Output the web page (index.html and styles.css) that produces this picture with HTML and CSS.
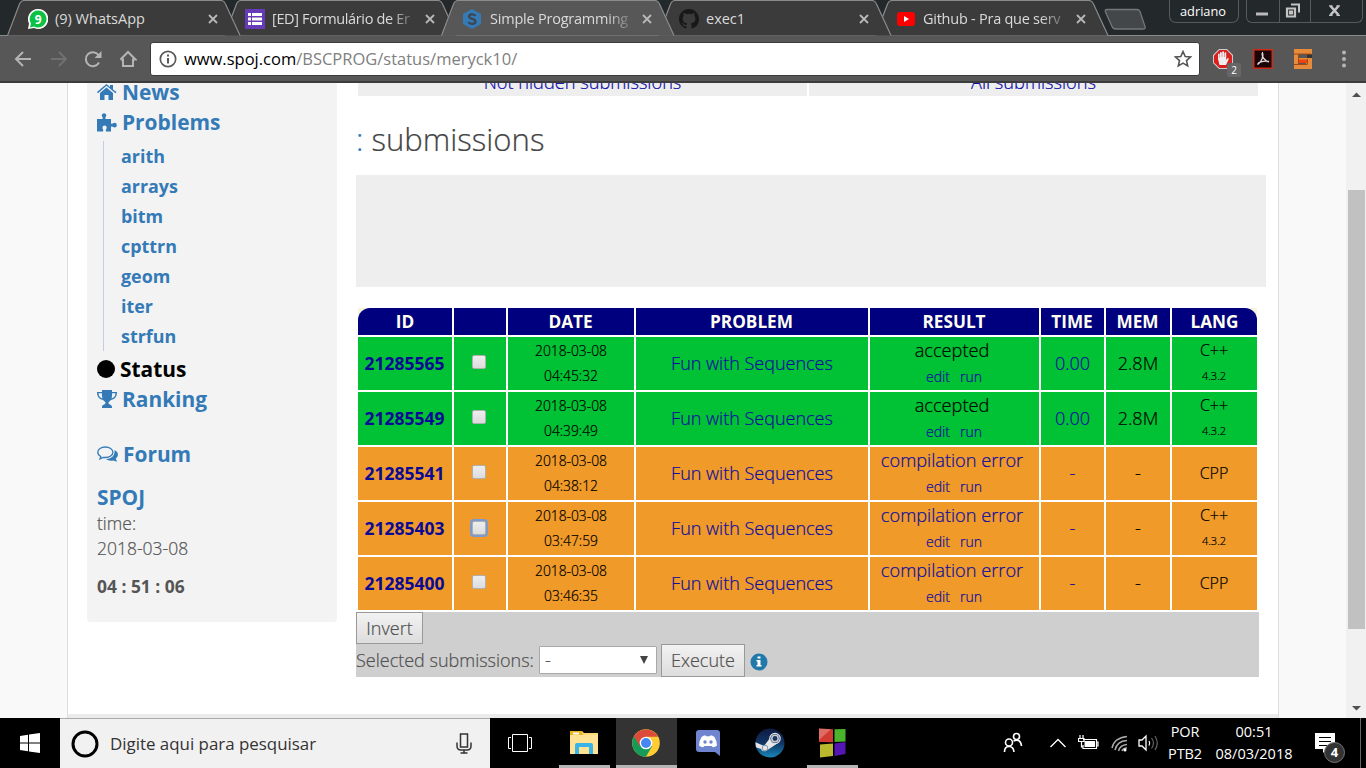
FILE: index.html
```html
<!DOCTYPE html>
<html lang="pt">
<head>
<meta charset="utf-8">
<title>Simple Programming</title>
<link rel="stylesheet" href="styles.css">
</head>
<body>
<svg class="defs" width="0" height="0">
  <defs>
    <g id="tab-shape"><path d="M0.5 35.5 L12.5 4 Q14 .5 17 .5 H214 Q217 .5 218.500 4 L233 35.500"/></g>
    <path id="cross" d="M1 1 L9 9 M9 1 L1 9"/>
  </defs>
</svg>
<header class="browser">
  <div class="tabstrip">
    <div class="tab t1"><svg class="shape" width="234" height="36"><use href="#tab-shape"/></svg>
      <svg class="fav" width="20" height="20"><path d="M10 0a10 10 0 1 1-4 19L0 20l1-5.500A10 10 0 0 1 10 0z" fill="#fff"/><path d="M10 1.500a8.500 8.500 0 1 1-4 16L2 18.500l1-4A8.500 8.500 0 0 1 10 1.500z" fill="#0cc143"/><text x="6.700" y="14.500" class="wa">9</text></svg>
      <span class="title s1">(9) WhatsApp</span><svg class="x" width="10" height="10"><use href="#cross"/></svg></div>
    <div class="tab t2"><svg class="shape" width="234" height="36"><use href="#tab-shape"/></svg>
      <svg class="fav" width="20" height="20"><path fill="#673ab7" d="M0 0h20v20H0z"/><path fill="#fff" d="M3 4h3v3H3zM7 4h10v3H7zM3 8.500h3v3H3zM7 8.500h10v3H7zM3 13h3v3H3zM7 13h10v3H7z"/></svg>
      <span class="title fade s2">[ED] Formulário de Er</span><svg class="x" width="10" height="10"><use href="#cross"/></svg></div>
    <div class="tab t3"><svg class="shape" width="234" height="36"><use href="#tab-shape"/></svg>
      <svg class="fav" width="20" height="20"><path fill="#337ab7" d="M10 0l9 5v10l-9 5-9-5V5z"/><path d="M13.500 6.800C12 4.700 7 4.700 7 7.500c0 3 6.500 1.800 6.500 5 0 3-5.500 3-7.200.7" fill="none" stroke="#3e454d" stroke-width="2.200"/></svg>
      <span class="title fade s3">Simple Programming</span><svg class="x" width="10" height="10"><use href="#cross"/></svg></div>
    <div class="tab t4"><svg class="shape" width="234" height="36"><use href="#tab-shape"/></svg>
      <svg class="fav" width="20" height="20" viewBox="0 0 16 16"><path fill="#191717" d="M8 0C3.580 0 0 3.580 0 8c0 3.540 2.290 6.530 5.470 7.590.4.070.55-.17.55-.38 0-.19-.01-.82-.01-1.490-2.010.37-2.530-.49-2.690-.94-.09-.23-.48-.94-.82-1.130-.28-.15-.68-.52-.01-.53.63-.01 1.080.58 1.230.82.72 1.210 1.870.87 2.330.66.070-.52.28-.87.51-1.070-1.780-.2-3.640-.89-3.640-3.950 0-.87.31-1.590.82-2.150-.08-.2-.36-1.020.08-2.120 0 0 .67-.21 2.200.82a7.400 7.400 0 0 1 4 0c1.530-1.040 2.200-.82 2.200-.82.44 1.100.16 1.920.08 2.120.51.56.82 1.270.82 2.150 0 3.070-1.870 3.750-3.650 3.950.29.25.54.73.54 1.480 0 1.070-.01 1.930-.01 2.200 0 .21.15.46.55.38A8 8 0 0 0 16 8c0-4.420-3.580-8-8-8z"/></svg>
      <span class="title s4">exec1</span><svg class="x" width="10" height="10"><use href="#cross"/></svg></div>
    <div class="tab t5"><svg class="shape" width="234" height="36"><use href="#tab-shape"/></svg>
      <svg class="fav" width="20" height="20"><rect x="1" y="3" width="18" height="14" rx="3" fill="#f00"/><path fill="#fff" d="M8 7l5 3-5 3z"/></svg>
      <span class="title fade s5">Github - Pra que serv</span><svg class="x" width="10" height="10"><use href="#cross"/></svg></div>
    <svg class="newtab" width="44" height="23"><path d="M3 1.500h30q2 0 3 2l5 15q1 2.500-2 2.500H12q-3 0-4-2.500L1.500 4q-1-2.500 1.500-2.500z"/></svg>
    <div class="user">adriano</div>
    <div class="winbtns">
      <svg width="32" height="23"><path class="f" d="M9 12.500h12v3H9z"/></svg>
      <svg width="31" height="23"><path d="M7 8.500h8v8H7zM10 11.500h2v2h-2z" stroke-width="2.200"/><path d="M11 4.500h8v8" stroke-width="2"/></svg>
      <svg width="52" height="23"><path d="M19.500 6l8 9M27.500 6l-8 9" stroke-width="2.600"/><path d="M18 5.800h3.500M25.500 5.800H29M18 15.300h3.500M25.500 15.300H29" stroke-width="1.200"/></svg>
    </div>
  </div>
  <div class="toolbar">
    <svg class="nav n1" width="18" height="18"><path d="M17 9H2M9 2L2 9l7 7"/></svg>
    <svg class="nav n2" width="18" height="18"><path d="M1 9h15M9 2l7 7-7 7"/></svg>
    <svg class="nav n3" width="18" height="18"><path d="M15 12.500A7 7 0 1 1 14.500 5"/><path class="tip" d="M17.500 1v7h-7z"/></svg>
    <svg class="nav n4" width="18" height="18"><path d="M4 8.500V16h10V8.500M1.500 9.500L9 2l7.500 7.500H14M1.500 9.500H4"/></svg>
    <div class="omnibox">
      <svg width="18" height="18"><circle cx="9" cy="9" r="7.700" fill="none" stroke="#5a5a5a" stroke-width="1.700"/><path d="M9 8v5.500M9 4.500v2" stroke="#5a5a5a" stroke-width="2"/></svg>
      <span class="url"><b>www.spoj.com</b>/BSCPROG/status/meryck10/</span>
      <svg class="star" width="18" height="18"><path d="M9 1.500l2.200 5 5.300.5-4 3.600 1.200 5.300L9 13.100l-4.700 2.800 1.200-5.300-4-3.600 5.300-.5z"/></svg>
    </div>
    <div class="ext e1"><svg width="20" height="20"><path d="M6 0h8l6 6v8l-6 6H6l-6-6V6z" fill="#ccc"/><path d="M6.500 1h7L19 6.500v7L13.500 19h-7L1 13.500v-7z" fill="#d8201f"/><path d="M6.500 16L5 10V5q1-1 1.700 0V9h.3V3.500q1-1 1.800 0V8h.4V2.800q1-1 1.800 0V8h.4V3.800q1-1 1.800 0V11l1.500-2q1.300 0 1 1.200l-2.700 5.800z" fill="#eee"/></svg><span>2</span></div>
    <svg class="ext e2" width="20" height="20"><path d="M0 0h20v20H0z" fill="#cd2d18"/><path d="M1.500 1.500h17v17h-17z" fill="#1c0306"/><path d="M9.500 3.800c1.500 3-1 9-4.500 11.500-.8-1.500 5-4 10.500-3 .5 1.500-4.500-1-6-5-.5-1.500-.5-3 0-3.500z" fill="none" stroke="#ddd" stroke-width="1.300"/></svg>
    <svg class="ext e3" width="20" height="20"><path d="M1 0h18v5H6v4h13v11H1v-4h12v-2H1z" fill="#e68b3c"/><path d="M1 5h5v10H1z" fill="#e68b3c"/><path d="M6 10.500h8v3.500H6z" fill="#f0430c"/><path d="M14 5.500h5V9h-5z" fill="#333"/><path d="M1 5h17M5.500 5v10M14.500 10v5M1 15.500h13.500" stroke="#a04b13" fill="none"/></svg>
    <svg class="dots" width="6" height="18"><circle cx="3" cy="2.500" r="2"/><circle cx="3" cy="9" r="2"/><circle cx="3" cy="15.500" r="2"/></svg>
  </div>
</header>

<div class="viewport">
  <div class="page">
    <nav class="sidebar">
      <a class="item"><svg width="20" height="16"><path d="M0 8l9.500-8L13 3V1h3v4.500L19.500 8l-1 1.200-9-7.500L1 9.200zM3 9l6.500-5.500L16 9v7h-4.500v-5h-4v5H3z"/></svg>News</a>
      <a class="item"><svg width="20" height="19"><path d="M0 6h5.500C6.500 4 4.500 3.500 4.800 2a2.300 2.300 0 0 1 4.500 0c.3 1.500-1.500 2-.8 4H14v4.500c2 .8 2-.7 3.500-.7a2.300 2.300 0 0 1 0 4.700c-1.500 0-1.500-1.500-3.500-.7V18.500H9c-.8-2 1-2.500.7-4a2 2 0 0 0-4.200 0c-.3 1.500 1.500 2 .5 4H0z"/></svg>Problems</a>
      <div class="sub"><a>arith</a><a>arrays</a><a>bitm</a><a>cpttrn</a><a>geom</a><a>iter</a><a>strfun</a></div>
      <a class="item status"><svg width="18" height="18"><circle cx="9" cy="9" r="9"/></svg>Status</a>
      <a class="item"><svg width="20" height="19"><path d="M5 0h10v2h5c0 4-1.500 7-6 8-1 1.300-2.500 1.500-2.500 3 0 1.500 3.500 1.500 3.500 4v1H5v-1c0-2.500 3.500-2.500 3.500-4 0-1.500-1.500-1.700-2.500-3C1.500 9 0 6 0 2h5zM1.500 3.300C1.700 6 3 8 5.500 8.500 5 7 4.800 5 5 3.300zM18.500 3.300H15c.2 1.700 0 3.700-.5 5.200 2.500-.5 3.800-2.500 4-5.200z" fill-rule="evenodd"/></svg>Ranking</a>
      <a class="item forum"><svg width="21" height="17"><path d="M8.300 1c4.200 0 7.600 2.300 7.600 5.300s-3.400 5.200-7.600 5.200l-2-.2L3 12.800l.8-2.300C2 9.500.8 8 .8 6.300.8 3.300 4 1 8.300 1z" fill="none" stroke="#337ab7" stroke-width="1.300"/><path d="M17.500 4c4.500 2 4.200 6.500 1.200 8.800l1.500 3-4-1.300c-3 .5-5.500 0-7-1.500 5 0 9-3 8.300-9z"/></svg>Forum</a>
      <a class="item spoj">SPOJ</a>
      <div class="time">time:<br>2018-03-08</div>
      <div class="clock">04 : 51 : 06</div>
    </nav>
    <main class="main">
      <div class="filters"><a>Not hidden submissions</a><a>All submissions</a></div>
      <h1><i>:</i> submissions</h1>
      <div class="ad"></div>
      <div class="grid">
        <div class="th first"><b>ID</b></div><div class="th"></div><div class="th">DATE</div><div class="th">PROBLEM</div><div class="th">RESULT</div><div class="th">TIME</div><div class="th">MEM</div><div class="th last"><b>LANG</b></div>

        <div class="ok id">21285565</div><div class="ok"><i class="check"></i></div><div class="ok date">2018-03-08<br>04:45:32</div><div class="ok link">Fun with Sequences</div><div class="ok result"><span>accepted</span><small><a>edit</a><a>run</a></small></div><div class="ok link">0.00</div><div class="ok">2.8M</div><div class="ok lang"><span>C++</span><small>4.3.2</small></div>

        <div class="ok id">21285549</div><div class="ok"><i class="check"></i></div><div class="ok date">2018-03-08<br>04:39:49</div><div class="ok link">Fun with Sequences</div><div class="ok result"><span>accepted</span><small><a>edit</a><a>run</a></small></div><div class="ok link">0.00</div><div class="ok">2.8M</div><div class="ok lang"><span>C++</span><small>4.3.2</small></div>

        <div class="err id">21285541</div><div class="err"><i class="check"></i></div><div class="err date">2018-03-08<br>04:38:12</div><div class="err link">Fun with Sequences</div><div class="err result link"><span>compilation error</span><small><a>edit</a><a>run</a></small></div><div class="err link">-</div><div class="err">-</div><div class="err lang">CPP</div>

        <div class="err id">21285403</div><div class="err"><i class="check focus"></i></div><div class="err date">2018-03-08<br>03:47:59</div><div class="err link">Fun with Sequences</div><div class="err result link"><span>compilation error</span><small><a>edit</a><a>run</a></small></div><div class="err link">-</div><div class="err">-</div><div class="err lang"><span>C++</span><small>4.3.2</small></div>

        <div class="err id">21285400</div><div class="err"><i class="check"></i></div><div class="err date">2018-03-08<br>03:46:35</div><div class="err link">Fun with Sequences</div><div class="err result link"><span>compilation error</span><small><a>edit</a><a>run</a></small></div><div class="err link">-</div><div class="err">-</div><div class="err lang">CPP</div>
      </div>
      <div class="actions">
        <div class="btn invert">Invert</div>
        <div class="line"><span class="lbl">Selected submissions:</span><div class="select"><span>-</span><svg width="8" height="8"><path d="M0 0h8L4 8z" fill="#444"/></svg></div><div class="btn exec">Execute</div>
        <svg class="info" width="18" height="18"><circle cx="9" cy="9" r="8.500" fill="#2179ab"/><path d="M7.500 3.500h3v2h-3zM6.500 7h4v5h1v1.500h-5V12h1V8.500h-1z" fill="#fff"/></svg></div>
      </div>
    </main>
  </div>
  <div class="scroll"><svg width="20" height="18"><path d="M6 14l4.500-4.500L15 14z"/></svg><div class="thumb"></div><svg class="down" width="20" height="18"><path d="M6 6h9l-4.500 4.500z"/></svg></div>
</div>

<footer class="taskbar">
  <div class="start"><svg width="20" height="20"><path d="M0 3l8-1.200v7.700H0zM9 1.600L20 0v9.500H9zM0 10.500h8v7.700L0 17zM9 10.500h11V20L9 18.400z" fill="#fff"/></svg></div>
  <div class="search"><svg width="28" height="28"><circle cx="14" cy="14" r="12" fill="none" stroke="#000" stroke-width="3"/></svg><span>Digite aqui para pesquisar</span><svg class="mic" width="16" height="21"><path d="M4.500 1h7v13h-7zM1 9.500V13q0 4 4 4h6q4 0 4-4V9.500M8 17v2.500M4.500 20h7" fill="none" stroke="#333" stroke-width="1.500"/></svg></div>
  <div class="app view"><svg width="24" height="18"><path d="M4.500.5h15v17h-15zM3 3.500H.5v11H3M21 3.500h2.500v11H21" fill="none" stroke="#fff"/></svg></div>
  <div class="app folder on"><svg width="28" height="24"><path d="M0 0h12l2 2h14v21H0z" fill="#f9d978"/><path d="M0 0h12l1 4H0z" fill="#eeb31d"/><path d="M3 1.500h6v2H3z" fill="#fff"/><path d="M0 4h28v19H0z" fill="#ffe393"/><path d="M5 23V14q0-2 2-2h14q2 0 2 2v9h-4v-7H9v7z" fill="#38b4e9"/></svg></div>
  <div class="app chrome on"><svg width="28" height="28"><circle cx="14" cy="14" r="13.800" fill="#fc3"/><path d="M14 14L2 7.200A13.800 13.800 0 0 0 14 27.800l6-10.500z" fill="#159c59"/><path d="M2 7.200A13.800 13.800 0 0 1 26 7.800H14L8 17.500z" fill="#dc4a3c"/><circle cx="14" cy="14" r="6.300" fill="#fff"/><circle cx="14" cy="14" r="5" fill="#4688f1"/></svg></div>
  <div class="app discord"><svg width="24" height="26"><path d="M3 0h18q3 0 3 3v23l-5-4H3q-3 0-3-3V3q0-3 3-3z" fill="#6f85d0"/><path d="M5.500 7q2-1.800 3.800-1.800l.7 1h4l.7-1q1.800 0 3.800 1.800 2.500 4 2.500 8.500-1.800 1.800-4 1.800L15.500 16h-7L7 17.300q-2.200 0-4-1.800Q3 11 5.500 7z" fill="#fff"/><circle cx="9" cy="12" r="1.700" fill="#6f85d0"/><circle cx="15" cy="12" r="1.700" fill="#6f85d0"/></svg></div>
  <div class="app steam"><svg width="30" height="30"><defs><linearGradient id="sg" x2="0" y2="1"><stop offset="0" stop-color="#0e1a42"/><stop offset=".5" stop-color="#103563"/><stop offset="1" stop-color="#1789ba"/></linearGradient><clipPath id="sc"><circle cx="15" cy="15" r="14.500"/></clipPath></defs><circle cx="15" cy="15" r="14.500" fill="url(#sg)"/><g clip-path="url(#sc)"><path d="M0 14l9 4 6-8 8 5-9 6-3 2q-4 1-5-2L0 19z" fill="#e6e6e9"/></g><circle cx="20" cy="10.500" r="5.200" fill="#183767" stroke="#e6e6e9" stroke-width="1.200"/><circle cx="20" cy="10.500" r="3.200" fill="none" stroke="#ccc" stroke-width="1.500"/><circle cx="10" cy="20" r="2.800" fill="none" stroke="#8995aa"/></svg></div>
  <div class="app blocks on"><svg width="28" height="30"><path d="M1 .5l14 .8v13L1 14z" fill="#d23b32"/><path d="M16.500 1.300L27.500 1v12.500l-11 .5z" fill="#4ab52b"/><path d="M2 16.500l13-1V28L2 29.500z" fill="#b9b92d"/><path d="M16.500 15.500L27.500 14v12l-11 2z" fill="#5517b4"/><path d="M1 .5l12 .8L1 12z" fill="#fff" opacity=".25"/></svg></div>
  <svg class="tray people" width="20" height="22"><g fill="none" stroke="#fff" stroke-width="1.600"><circle cx="13.500" cy="4.500" r="3"/><circle cx="6" cy="10.500" r="3.500"/><path d="M1.500 20q0-5.500 4.500-5.500t5 5.500M10.500 9q7-3 8 5"/></g></svg>
  <svg class="tray up" width="16" height="10"><path d="M.5 9L8 1.500 15.500 9" fill="none" stroke="#fff" stroke-width="1.300"/></svg>
  <svg class="tray bat" width="21" height="16"><path d="M5 4.500h13.500v9H5V10M18.500 7h1.500v4h-1.500M2 0v3M5 0v3M.5 3.500h5.500v3H.5zM3.500 7v5h2" fill="none" stroke="#fff" stroke-width="1.200"/><path d="M6.500 6H17v6H6.500z" fill="#fff"/></svg>
  <svg class="tray wifi" width="17" height="17"><g fill="none" stroke="#aaa" stroke-width="1.500"><path d="M1 13Q3 3 16 1.500"/><path d="M4 15Q6 6 16 5.500M7.500 16Q9 10 16 9.500M11 16q1-3 5-3"/></g><circle cx="14" cy="15" r="1.500" fill="#fff"/></svg>
  <svg class="tray vol" width="21" height="18"><path d="M1 6h3l4-4v14l-4-4H1z" fill="none" stroke="#fff" stroke-width="1.300"/><path d="M11 7q1.500 2 0 4.500" fill="none" stroke="#fff" stroke-width="1.200"/><path d="M13.500 4q4 5 0 10.500M17 2q4.500 7 0 14" fill="none" stroke="#666" stroke-width="1.200"/></svg>
  <div class="info2 lang2"><span>POR</span><span>PTB2</span></div>
  <div class="info2 datetime"><span>00:51</span><span>08/03/2018</span></div>
  <div class="notif"><svg width="20" height="20"><path d="M0 0h20v16h-8l-4 4v-4H0z" fill="#fff"/><path d="M4 4.500h12M4 8.500h12M4 12.500h8" stroke="#000"/></svg><span>4</span></div>
  <div class="peek"></div>
</footer>
</body>
</html>
```
FILE: styles.css
```css
*{box-sizing:border-box}
body{margin:0;width:1366px;height:768px;overflow:hidden;font-family:"Open Sans","Noto Sans",sans-serif;font-weight:300;display:flex;flex-direction:column;background:#fff}
svg{display:block;flex:none}
.defs{position:absolute}
.browser{height:83px;flex:none;background:#575757;border-bottom:2px solid #3c3c3c;font-weight:400}
.tabstrip{height:36px;display:flex;background:#23282b;border-bottom:1px solid #8b8b8b}
.tab{position:relative;width:233px;height:36px;margin-right:-16px;flex:none;display:flex;align-items:center;padding:2px 0 0 21px;font-size:14.500px;color:#dadada}
.shape{position:absolute;left:0;top:0;z-index:-1;fill:#3b3b3b;stroke:#8b8b8b;stroke-width:1.2}
.t1{margin-left:7px;z-index:5}.t2{z-index:4}.t3{z-index:8}.t4{z-index:3}.t5{z-index:2}
.t1,.t2,.t4,.t5{height:35px}
.t3 .shape{fill:#575757}
.title{margin-left:7px;width:140px;white-space:nowrap;line-height:24px}
.s2{letter-spacing:-.35px}
.s3{letter-spacing:-.22px;padding-left:1px}
.s5{letter-spacing:-.25px}
.fade{-webkit-mask-image:linear-gradient(90deg,#000 84%,rgba(0,0,0,.25));mask-image:linear-gradient(90deg,#000 84%,rgba(0,0,0,.25))}
.x{margin-left:13px;fill:none;stroke:#b8b8b8;stroke-width:1.8}
.wa{font:bold 12px "Open Sans",sans-serif;fill:#fff}
.newtab{margin:8px 0 0 12px;fill:#43474a;stroke:#747779;stroke-width:1.3}
.user{margin-left:21px;width:70px;flex:none;height:23px;border:1px solid #555a5d;border-top:0;border-radius:0 0 7px 7px;color:#fff;font-size:12.800px;line-height:22px;text-align:center;padding-right:2px}
.winbtns{display:flex;margin-left:7px;width:117px;flex:none;height:23px;border:1px solid #555a5d;border-top:0;border-radius:0 0 6px 6px}
.winbtns svg{fill:none;stroke:#c4c4c4}
.winbtns svg+svg{border-left:1px solid #555a5d}
.winbtns .f{fill:#bbb;stroke:none}
.toolbar{height:45px;display:flex;align-items:center;padding-left:14px}
.nav{fill:none;stroke:#b4b4b4;stroke-width:2}
.n2{margin-left:18px;stroke:#777}.n3{margin-left:16px}.n4{margin-left:17px}
.n2{stroke:#717171}
.tip{fill:#b4b4b4;stroke:none}
.omnibox{width:1050px;height:34px;margin-left:13px;background:#fff;border:1px solid #3b3b3b;border-radius:3px;display:flex;align-items:center;padding-left:8px}
.url{margin-left:7px;font-size:16.500px;color:#808080;white-space:nowrap;width:990px}
.url b{font-weight:400;color:#000}
.star{fill:none;stroke:#555;stroke-width:1.6}
.ext{flex:none}
.e1{position:relative;margin-left:13px}
.e1 span{position:absolute;left:14px;top:14px;width:14px;height:14px;background:#666;color:#fff;font-size:10px;line-height:15px;text-align:center;border-radius:2px}
.e2,.e3{margin-left:20px}
.dots{margin-left:28px;fill:#b4b4b4}

.viewport{height:635px;flex:none;display:flex;background:#f9f9f9;overflow:hidden}
.page{margin-left:67px;width:1212px;height:635px;border:solid #ddd;border-width:0 1px;background:linear-gradient(#fff 631px,#ebebeb 631px);display:flex;padding-left:19px;align-items:flex-start}
.sidebar{width:250px;height:539px;padding:0 10px;background:#f3f3f3;border-radius:0 0 4px 4px;color:#444}
.item{display:flex;align-items:center;gap:5px;height:30px;line-height:30px;font-size:20.900px;font-weight:700;color:#337ab7;fill:#337ab7}
.item:first-child{margin-top:-6px}
.sub{display:flex;flex-direction:column;margin:4px 0 3px 6px;padding-left:17px;border-left:1px solid #c4cbec}
.sub a{height:30px;line-height:30px;font-size:17.900px;font-weight:700;color:#337ab7}
.status{color:#000;fill:#000}
.forum{margin-top:25px}
.spoj{margin-top:13px}
.time{margin-top:-1px;line-height:25px;font-size:17.500px;color:#555}
.clock{margin-top:13px;line-height:25px;font-size:17.400px;font-weight:700;color:#555}
.time,.main{-webkit-text-stroke:.22px}
.th,.id{-webkit-text-stroke:0}
.main{margin-left:19px;width:910px;flex:none}
.filters{display:flex;gap:2px;margin-left:2px;height:13px}
.filters a{width:449px;height:13px;background:#eee;line-height:28px;font-size:18.200px;color:#0a0aa8;overflow:hidden;display:flex;justify-content:center;align-items:flex-end}
h1{margin:22px 0 0;height:44px;line-height:43px;font-size:31.100px;font-weight:300;color:#444}
h1 i{font-style:normal;color:#337ab7}
.ad{margin-top:13px;height:112px;background:#eee}
.grid{margin:21px 0 2px 2px;width:899px;display:grid;grid-template-columns:94px 52px 126px 232px 169px 63px 64px 85px;grid-template-rows:27px repeat(5,53px);gap:2px;font-size:18px}
.grid>div{display:flex;flex-direction:column;align-items:center;justify-content:center;line-height:25px;color:#000;white-space:nowrap;text-align:center}
.grid>.th{background:#00007f;color:#fffff0;font-weight:700;font-size:17.200px;padding-right:1px}
.grid>.first,.grid>.last{background:#f5f5dc;padding:0}
.th b{width:100%;height:27px;line-height:27px;background:#00007f;font-weight:700}
.first b{border-radius:12px 0 0 0}.last b{border-radius:0 12px 0 0}
.grid>.ok{background:#00c234}
.grid>.err{background:#f09a29}
.grid>.id{font-weight:700;color:#0a0a96;font-size:17.500px;padding-right:1px}
.grid>.link,.grid small a{color:#0d0da0}
.grid>.date{font-size:13.800px;line-height:25px;padding-bottom:2px}
.result span{margin:-1px 5px 1px 0;font-size:18.200px}
.result small{display:flex;gap:10px;font-size:14px;line-height:25px;margin-right:1px}
.grid>.lang{font-size:16px;padding-right:1px}
.lang span{margin-top:-2px}
.lang small{font-size:11px}
.check{width:14px;height:14px;margin:-3px 2px 0 0;border:1px solid #b0b0b0;border-radius:2px;background:linear-gradient(#eee,#dcdcdc)}
.focus{outline:2px solid #7b9bd0;outline-offset:0;margin-top:-1px}
.actions{width:903px;height:65px;background:#cfcfcf;font-size:18px;color:#505050}
.btn{height:32px;border:1px solid #999;background:linear-gradient(#f2f2f2,#ddd);line-height:31px;text-align:center}
.invert{width:67px}
.line{display:flex;align-items:center;height:33px}
.lbl{width:183px;white-space:nowrap;margin-top:-1px}
.select{width:118px;height:28px;border:1px solid #a9a9a9;background:#fff;display:flex;align-items:center;justify-content:space-between;padding:0 8px 0 5px;margin-top:-1px;border-radius:1px}
.exec{width:84px;height:33px;margin-left:4px}
.info{margin:3px 0 0 5px}
.scroll{margin-left:67px;width:20px;height:635px;background:#f1f1f1;fill:#505050;display:flex;flex-direction:column}
.thumb{margin:89px 1px 0 2px;height:439px;background:#c1c1c1}
.down{margin-top:auto}

.taskbar{height:50px;flex:none;display:flex;background:#000;color:#fff;font-weight:400}
.start{width:60px;display:flex;align-items:center;justify-content:center}
.search{width:430px;background:#f1f1f1;border-top:1px solid #aaa;color:#333;display:flex;align-items:center;padding-left:11px;font-size:16.900px}
.search span{margin-left:11px;width:346px}
.app{height:50px;display:flex;align-items:center;justify-content:center;flex:none}
.view{width:60px}
.folder{width:51px;margin-left:9px;padding-right:1px}
.chrome{width:61px;margin-left:6px;background:#333;padding-right:2px}
.discord{width:62px;padding-right:1px}
.steam{width:62px;padding-right:1px}
.blocks{width:51px;margin-left:6px;padding-right:1px}
.on{border-bottom:3px solid #b5b5b5;padding-top:3px}
.tray{align-self:center}
.people{margin-left:145px}
.up{margin-left:27px}
.bat{margin-left:12px}
.wifi{margin-left:12px}
.vol{margin-left:10px}
.info2{display:flex;flex-direction:column;align-items:center;line-height:22px;font-size:14.500px;padding-top:3px;white-space:nowrap}
.lang2{margin-left:8px;width:36px;letter-spacing:-.1px}
.datetime{margin-left:12px;width:78px}
.notif{position:relative;margin:15px 0 0 22px;width:32px}
.notif span{position:absolute;left:9px;top:9px;width:21px;height:21px;border:1px solid #777;border-radius:50%;background:#333;font-size:13px;font-weight:700;line-height:19px;text-align:center}
.peek{margin-left:auto;margin-right:5px;width:1px;background:#666}
```
